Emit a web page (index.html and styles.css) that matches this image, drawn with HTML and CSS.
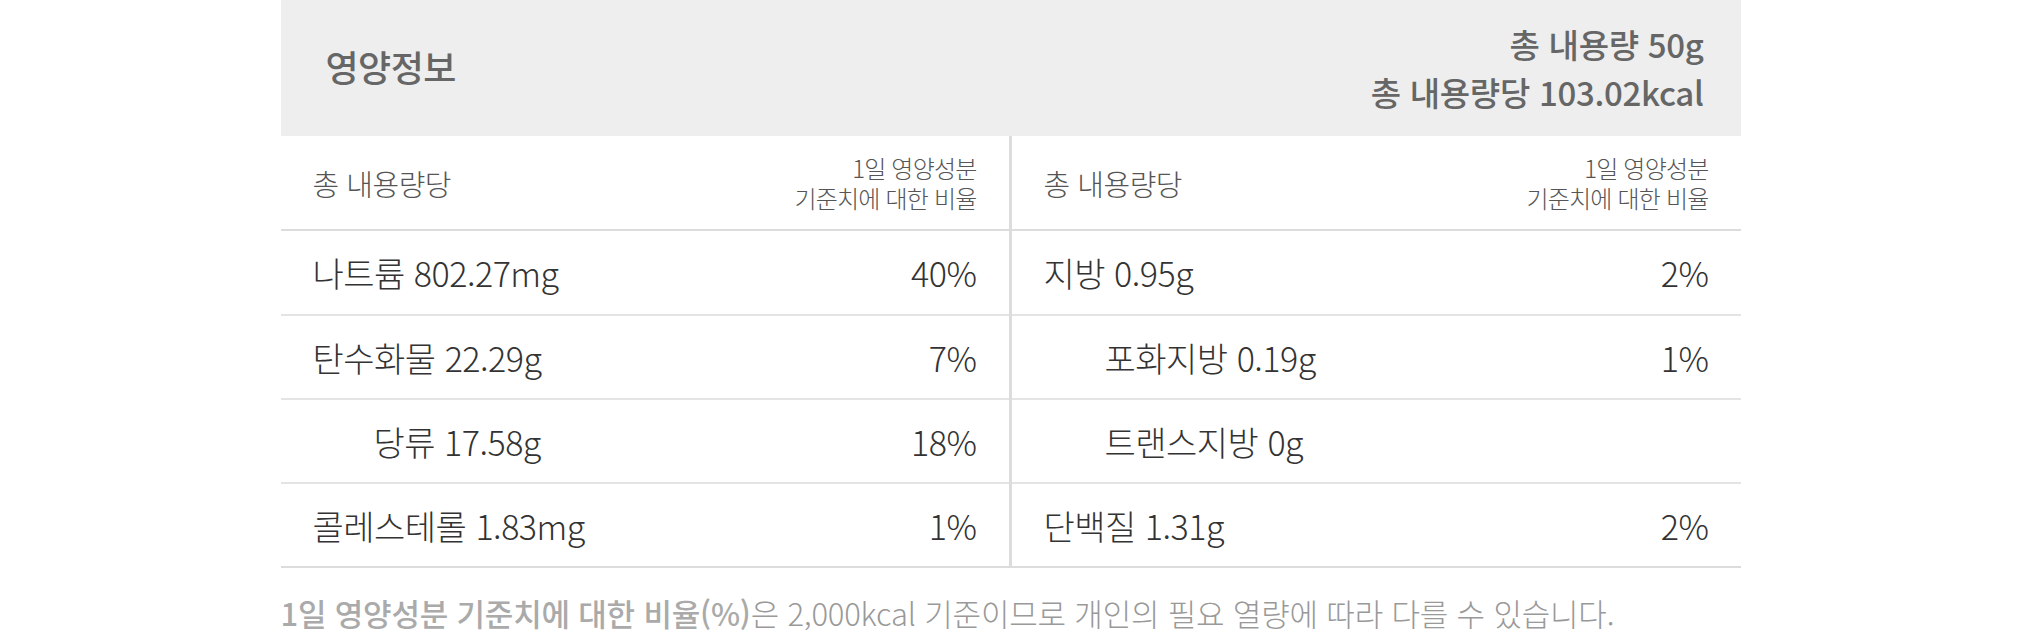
FILE: index.html
```html
<!DOCTYPE html>
<html lang="ko">
<head>
<meta charset="utf-8">
<link rel="stylesheet" href="styles.css">
</head>
<body>
<div class="wrap">
  <div class="head">
    <div class="title">영양정보</div>
    <div class="totals">
      <div>총 내용량 50g</div>
      <div>총 내용량당 103.02kcal</div>
    </div>
  </div>
  <div class="grid">
    <div class="col left">
      <div class="sub">
        <span>총 내용량당</span>
        <span class="ratio"><span class="ln">1일 영양성분</span><span class="ln">기준치에 대한 비율</span></span>
      </div>
      <div class="row"><span>나트륨 802.27mg</span><span>40%</span></div>
      <div class="row"><span>탄수화물 22.29g</span><span>7%</span></div>
      <div class="row"><span class="ind">당류 17.58g</span><span>18%</span></div>
      <div class="row"><span>콜레스테롤 1.83mg</span><span>1%</span></div>
    </div>
    <div class="col right">
      <div class="sub">
        <span>총 내용량당</span>
        <span class="ratio"><span class="ln">1일 영양성분</span><span class="ln">기준치에 대한 비율</span></span>
      </div>
      <div class="row"><span>지방 0.95g</span><span>2%</span></div>
      <div class="row"><span class="ind">포화지방 0.19g</span><span>1%</span></div>
      <div class="row"><span class="ind">트랜스지방 0g</span><span></span></div>
      <div class="row"><span>단백질 1.31g</span><span>2%</span></div>
    </div>
  </div>
  <p class="note"><b>1일 영양성분 기준치에 대한 비율(%)</b>은 2,000kcal 기준이므로 개인의 필요 열량에 따라 다를 수 있습니다.</p>
</div>
</body>
</html>
```
FILE: styles.css
```css
* { box-sizing: border-box; }
html, body { margin: 0; padding: 0; background: #fff; }
body {
  font-family: "Noto Sans CJK KR", "Noto Sans", sans-serif;
  color: #333;
}
.wrap {
  width: 1460px;
  margin: 0 auto;
}
.head {
  height: 136px;
  background: #eeeeee;
  display: flex;
  justify-content: space-between;
  align-items: center;
  padding: 0 37px 0 45px;
  color: #666;
  font-weight: 500;
}
.title {
  font-size: 36px;
  letter-spacing: -0.5px;
  padding-bottom: 4px;
}
.totals {
  text-align: right;
  font-size: 33px;
  letter-spacing: -0.3px;
  line-height: 48px;
}
.grid {
  display: grid;
  grid-template-columns: 731px 1fr;
  border-bottom: 2px solid #dcdcdc;
}
.col.left { border-right: 3px solid #dcdcdc; }
.sub {
  height: 95px;
  border-bottom: 2px solid #dcdcdc;
  display: flex;
  justify-content: space-between;
  align-items: center;
  padding: 0 32px;
  font-weight: 300;
  font-size: 29px;
  letter-spacing: -0.5px;
  color: #555;
}
.ratio {
  display: flex;
  flex-direction: column;
  align-items: flex-end;
  font-size: 24px;
  letter-spacing: -0.8px;
}
.ratio .ln {
  display: block;
  height: 30px;
  line-height: 30px;
}
.row {
  height: 84px;
  border-top: 2px solid #e4e4e4;
  display: flex;
  justify-content: space-between;
  align-items: center;
  padding: 0 32px;
  font-weight: 300;
  font-size: 34px;
  letter-spacing: -0.5px;
  color: #333;
}
.sub + .row { border-top: none; height: 83px; }
.ind { padding-left: 61px; }
.note {
  margin: 22px 0 0 0;
  font-size: 31px;
  letter-spacing: -0.2px;
  font-weight: 300;
  color: #999;
}
.note b { font-weight: 500; color: #aaa; }
```
